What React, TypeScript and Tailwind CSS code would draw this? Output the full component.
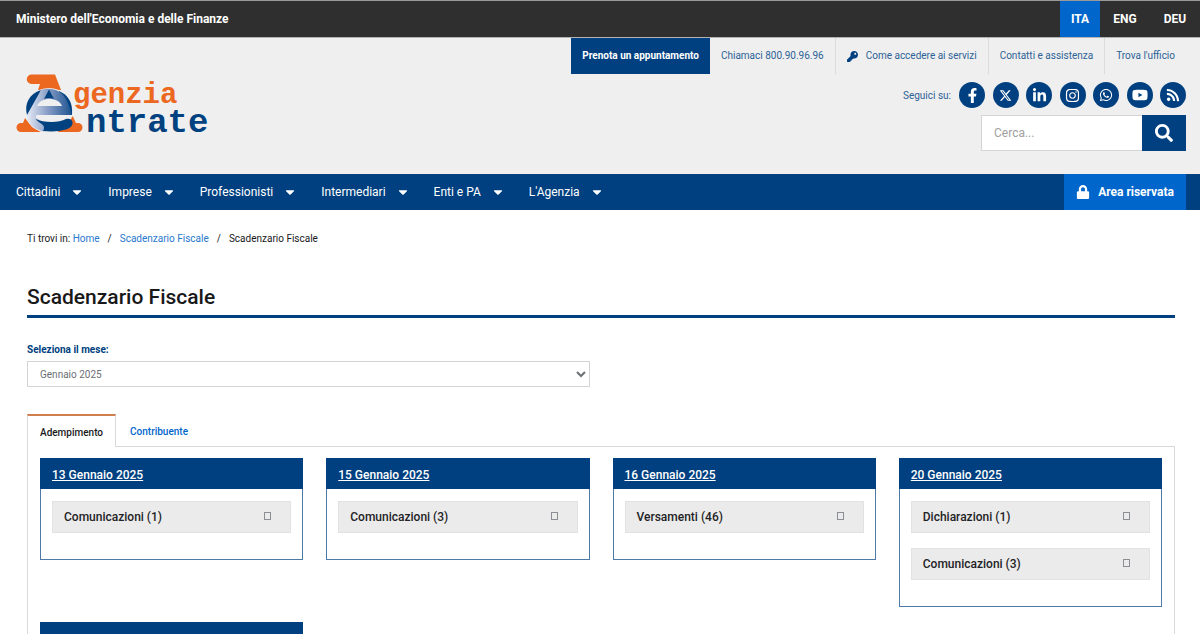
import type { IconType } from "react-icons";
import {
  FaCaretDown,
  FaFacebookF,
  FaInstagram,
  FaKey,
  FaLinkedinIn,
  FaLock,
  FaRss,
  FaSearch,
  FaWhatsapp,
  FaYoutube,
} from "react-icons/fa";
import { FaXTwitter } from "react-icons/fa6";

const languages = ["ITA", "ENG", "DEU"];

const menu = [
  "Cittadini",
  "Imprese",
  "Professionisti",
  "Intermediari",
  "Enti e PA",
  "L'Agenzia",
];

const socials: { name: string; Icon: IconType; size: number }[] = [
  { name: "Facebook", Icon: FaFacebookF, size: 15 },
  { name: "X", Icon: FaXTwitter, size: 13 },
  { name: "LinkedIn", Icon: FaLinkedinIn, size: 15 },
  { name: "Instagram", Icon: FaInstagram, size: 15 },
  { name: "WhatsApp", Icon: FaWhatsapp, size: 14 },
  { name: "YouTube", Icon: FaYoutube, size: 16 },
  { name: "RSS", Icon: FaRss, size: 14 },
];

const months = ["Gennaio 2025", "Febbraio 2025", "Marzo 2025"];

const deadlines = [
  { date: "13 Gennaio 2025", items: ["Comunicazioni (1)"] },
  { date: "15 Gennaio 2025", items: ["Comunicazioni (3)"] },
  { date: "16 Gennaio 2025", items: ["Versamenti (46)"] },
  { date: "20 Gennaio 2025", items: ["Dichiarazioni (1)", "Comunicazioni (3)"] },
  { date: "27 Gennaio 2025", items: ["Comunicazioni (1)"] },
];

const Logo = () => {
  return (
    <svg width="200" height="70" viewBox="0 0 200 70" role="img" aria-label="Agenzia Entrate">
      <defs>
        <linearGradient id="letter" x1="0" y1="0" x2="1" y2="0">
          <stop offset="0" stopColor="#e6ebf5" />
          <stop offset="0.45" stopColor="#8b9fc8" />
          <stop offset="1" stopColor="#1d5490" />
        </linearGradient>
      </defs>
      {/* orange A */}
      <path
        d="M15.500 0.500H39L45 16H22L24 10H15.500A4.700 4.700 0 0 1 15.500 0.500Z"
        fill="#ec6720"
      />
      <path d="M9 44L16 53L25 58H5A4.500 4.500 0 0 1 5 49H7Z" fill="#ec6720" />
      <path d="M46 42.500H57L60 49H62A4.500 4.500 0 0 1 62 58H42Z" fill="#ec6720" />
      {/* globe with the e */}
      <ellipse cx="33" cy="36.500" rx="24" ry="22.500" fill="#efefef" />
      <path d="M11 41C8 30 13 20 25 16L14 43Z" fill="#00417f" />
      <path d="M43 17C52 21 57 28 56 41L48 40Z" fill="#00417f" />
      <path
        d="M25 16C35 12.500 46 17 50 25C53 31 55 36 55.500 41H20.500C22 46 27 49 30 51C32 54 30 57 27 57.500C17 55 10 48 11 41Z"
        fill="url(#letter)"
      />
      <path d="M33 15.500L38 25C35 23.500 31 23.500 28 25Z" fill="#00417f" />
      <path d="M21 32C24 22.500 43 22.500 46 32Z" fill="#efefef" />
      <path d="M20 41.500H47L48 43C40 47 28 48 20 44Z" fill="#efefef" />
      <path
        d="M19.500 45C28 49 43 49 50 45C53 44 56 45 56.500 48C57 52 54 54 50 55.500C44 57.500 35 58 27 57C29 54 28 51 25 49.500C23 48 21 47 19.500 45Z"
        fill="#00417f"
      />
      <text x="57" y="29" fontSize="29" className="fill-[#ec6720] font-['Liberation_Mono',monospace] font-bold">
        genzia
      </text>
      <text x="70" y="58" fontSize="34" className="fill-[#00417f] font-['Liberation_Mono',monospace] font-bold">
        ntrate
      </text>
    </svg>
  );
};

const Header = () => {
  return (
    <header>
      {/* Top bar */}
      <div className="flex items-stretch justify-between border-t border-b border-t-[#999] border-b-[#b3b3b3] bg-[#2f2f2f] text-white">
        <a href="#" className="py-2 pl-4 text-[12px] leading-5 font-bold">
          Ministero dell'Economia e delle Finanze
        </a>
        <div className="flex text-[12px] leading-5 font-bold">
          {languages.map((lang) => (
            <a
              key={lang}
              href="#"
              className={lang === "ITA" ? "w-10 bg-[#0066cc] py-2 text-center" : "w-[50px] py-2 text-center"}
            >
              {lang}
            </a>
          ))}
        </div>
      </div>

      {/* Logo, quick links and search */}
      <div className="flex justify-between bg-[#efefef] pr-[14px] pb-[23px] text-[#00417f]">
        <a href="#" className="pt-9 pl-4">
          <Logo />
        </a>
        <div className="flex flex-col items-end">
          <div className="flex text-[10px] leading-9 text-[#2d6296]">
            <a href="#" className="bg-[#004080] px-[11px] font-bold text-white">
              Prenota un appuntamento
            </a>
            <a href="#" className="px-[11px]">
              Chiamaci 800.90.96.96
            </a>
            <a href="#" className="flex items-center gap-2 border-l border-[#dcdcdc] px-[11px]">
              <FaKey size={11} className="text-[#004080]" />
              Come accedere ai servizi
            </a>
            <a href="#" className="border-l border-[#dcdcdc] px-[11px]">
              Contatti e assistenza
            </a>
            <a href="#" className="border-l border-[#dcdcdc] px-[11px]">
              Trova l'ufficio
            </a>
          </div>

          <div className="mt-2 flex items-center gap-2">
            <span className="text-[10px] text-[#2d6296]">Seguici su:</span>
            <div className="flex w-[227px] justify-between">
              {socials.map(({ name, Icon, size }) => (
                <a
                  key={name}
                  href="#"
                  aria-label={name}
                  className="flex size-[26px] items-center justify-center rounded-full bg-[#004080] text-white"
                >
                  <Icon size={size} />
                </a>
              ))}
            </div>
          </div>

          <form className="mt-[7px] flex h-9">
            <input
              type="text"
              aria-label="Cerca"
              placeholder="Cerca..."
              className="w-[161px] border border-r-0 border-[#d4d4d4] bg-white px-3 text-[12px] outline-none placeholder:text-[#a0a0a0]"
            />
            <button
              type="button"
              aria-label="Avvia la ricerca"
              className="flex w-11 items-center justify-center bg-[#004080] text-white"
            >
              <FaSearch size={18} />
            </button>
          </form>
        </div>
      </div>

      {/* Main menu */}
      <nav className="flex h-9 items-stretch justify-between bg-[#004080] pr-[14px] pl-4 text-white">
        <div className="flex items-center gap-6">
          {menu.map((item) => (
            <button key={item} type="button" className="flex items-center gap-[10px] text-[12px]">
              {item}
              <FaCaretDown size={14} />
            </button>
          ))}
        </div>
        <a href="#" className="flex items-center gap-2 bg-[#0066cc] px-3 text-[12px] font-bold">
          <FaLock size={14} />
          Area riservata
        </a>
      </nav>
    </header>
  );
};

const DeadlineCard = ({ date, items }: { date: string; items: string[] }) => {
  return (
    <section className="border border-[#4d7aa6]">
      <h2 className="-mx-px -mt-px bg-[#004080] px-3 pt-[3px] text-[12px] leading-7 font-medium text-white">
        <a href="#" className="underline">
          {date}
        </a>
      </h2>
      <div className="px-[11px] pt-3 pb-[11px]">
        {items.map((item) => (
          <button
            key={item}
            type="button"
            className="mb-[15px] flex h-8 w-full items-center justify-between border border-[#e2e2e2] bg-[#ebebeb] pr-[19px] pl-[11px] text-[12px] font-medium text-[#1f2326]"
          >
            {item}
            <span className="mb-[2px] h-2 w-[7px] border border-[#8b8f93]" />
          </button>
        ))}
      </div>
    </section>
  );
};

const App = () => {
  return (
    <div className="h-screen overflow-hidden bg-white font-[Roboto,sans-serif] text-[#19191a]">
      <Header />

      <main className="pr-[25px] pl-[27px]">
        <nav aria-label="Percorso" className="flex pt-[21px] text-[10px] leading-4">
          <span>Ti trovi in:&nbsp;</span>
          <a href="#" className="text-[#2a78cc]">
            Home
          </a>
          <span className="px-2">/</span>
          <a href="#" className="text-[#2a78cc]">
            Scadenzario Fiscale
          </a>
          <span className="px-2">/</span>
          <span>Scadenzario Fiscale</span>
        </nav>

        <h1 className="mt-9 border-b-3 border-[#004080] pb-1 text-[21px] leading-7 font-medium">
          Scadenzario Fiscale
        </h1>

        {/* Month */}
        <div className="mt-6 flex w-[49%] flex-col">
          <label htmlFor="month" className="text-[10px] leading-4 font-bold text-[#004080]">
            Seleziona il mese:
          </label>
          <select
            id="month"
            className="mt-[3px] h-[26px] border border-[#d4d4d4] bg-white pl-2 text-[10px] text-[#6b7075]"
          >
            {months.map((month) => (
              <option key={month}>{month}</option>
            ))}
          </select>
        </div>

        {/* Tabs */}
        <div role="tablist" className="mt-[27px] flex text-[10px] font-medium">
          <button
            type="button"
            role="tab"
            aria-selected="true"
            className="z-10 -mb-px h-[33px] border-x border-t-2 border-x-[#d9d9d9] border-t-[#cf7f4d] bg-white px-3 pt-px"
          >
            Adempimento
          </button>
          <button type="button" role="tab" aria-selected="false" className="px-[14px] pt-[3px] text-[#0066cc]">
            Contribuente
          </button>
        </div>
        <div
          role="tabpanel"
          className="grid grid-cols-4 items-start gap-x-[23px] gap-y-[15px] border border-[#d9d9d9] px-3 pt-[11px] pb-3"
        >
          {deadlines.map((deadline) => (
            <DeadlineCard key={deadline.date} {...deadline} />
          ))}
        </div>
      </main>
    </div>
  );
};

export default App;
